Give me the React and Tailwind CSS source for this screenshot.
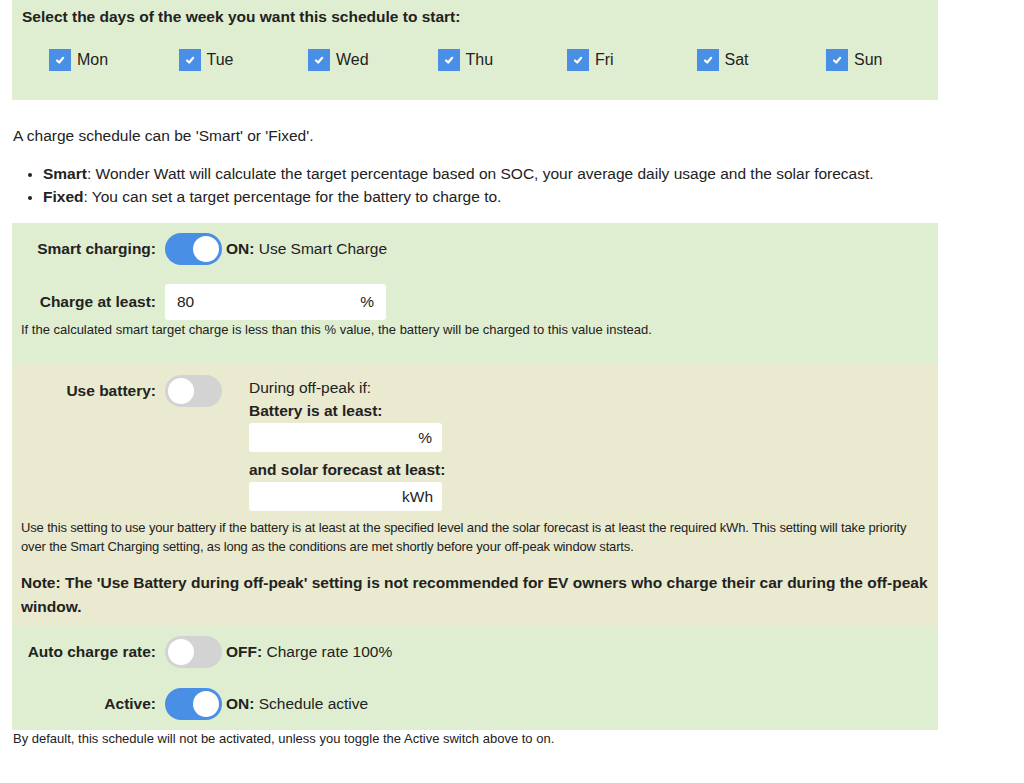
import React from "react";

const days = ["Mon", "Tue", "Wed", "Thu", "Fri", "Sat", "Sun"];

function Check() {
  return (
    <span className="flex h-[22px] w-[22px] items-center justify-center bg-[#4a8fe6]">
      <svg width="12" height="12" viewBox="0 0 12 12">
        <path d="M3 6.5 L5.2 8.5 L9.2 3.8" fill="none" stroke="white" strokeWidth="2.2" strokeLinecap="round" strokeLinejoin="round" />
      </svg>
    </span>
  );
}

function Toggle({ on }) {
  return (
    <span
      className={
        "flex h-[32px] w-[57px] shrink-0 items-center rounded-full p-[3px] " +
        (on ? "justify-end bg-[#4a8fe6]" : "justify-start bg-[#d3d3d3]")
      }
    >
      <span className="block h-[26px] w-[26px] rounded-full bg-white" />
    </span>
  );
}

function Row({ label, children, className = "" }) {
  return (
    <div className={"flex items-center " + className}>
      <div className="w-[144px] shrink-0 text-right text-[15.5px] font-bold text-[#222]">{label}</div>
      <div className="ml-[9px] flex items-center">{children}</div>
    </div>
  );
}

export default function App() {
  return (
    <div
      className="min-h-[783px] bg-white text-[#222]"
      style={{ fontFamily: '"Liberation Sans", Arial, sans-serif' }}
    >
      <div className="ml-[12px] w-[926px] bg-[#dfeed0] pb-[29px] pt-[7px]">
        <div className="pl-[10px] text-[15.5px] font-bold leading-[20px]">
          Select the days of the week you want this schedule to start:
        </div>
        <div className="mt-[22px] flex pl-[37px]">
          {days.map((d) => (
            <div key={d} className="flex w-[129.5px] shrink-0 items-center gap-[6px]">
              <Check />
              <span className="text-[16px] leading-[22px]">{d}</span>
            </div>
          ))}
        </div>
      </div>

      <p className="ml-[13px] mt-[26px] text-[15.5px] leading-[20px]">
        A charge schedule can be 'Smart' or 'Fixed'.
      </p>
      <ul className="ml-[43px] mt-[16px] list-disc text-[15.5px] leading-[23px] marker:text-[13px]">
        <li>
          <b>Smart</b>: Wonder Watt will calculate the target percentage based on SOC, your average daily usage and the solar forecast.
        </li>
        <li>
          <b>Fixed</b>: You can set a target percentage for the battery to charge to.
        </li>
      </ul>

      <div className="ml-[12px] mt-[15px] w-[926px] bg-[#dfeed0] pb-[24px] pt-[10px]">
        <Row label="Smart charging:">
          <Toggle on />
          <span className="ml-[4px] text-[15.5px]">
            <b>ON:</b> Use Smart Charge
          </span>
        </Row>
        <Row label="Charge at least:" className="mt-[19px]">
          <div className="flex h-[36px] w-[221px] items-center justify-between rounded-[3px] bg-white px-[12px] text-[15.5px]">
            <span>80</span>
            <span>%</span>
          </div>
        </Row>
        <p className="ml-[9px] mt-[1px] text-[13px] leading-[18px]">
          If the calculated smart target charge is less than this % value, the battery will be charged to this value instead.
        </p>
      </div>

      <div className="ml-[12px] w-[926px] bg-[#e9eacf] pb-[7px] pt-[12px]">
        <div className="flex items-start">
          <div className="flex h-[32px] w-[144px] shrink-0 items-center justify-end text-[15.5px] font-bold">
            Use battery:
          </div>
          <div className="ml-[9px]">
            <Toggle />
          </div>
          <div className="ml-[27px] mt-[1px] w-[193px]">
            <div className="text-[15.5px] leading-[23px]">During off-peak if:</div>
            <div className="text-[15.5px] font-bold leading-[23px]">Battery is at least:</div>
            <div className="mt-[1px] flex h-[29px] items-center justify-end rounded-[3px] bg-white px-[10px] text-[15.5px]">%</div>
            <div className="mt-[6px] whitespace-nowrap text-[15.5px] font-bold leading-[24px]">and solar forecast at least:</div>
            <div className="flex h-[29px] items-center justify-end rounded-[3px] bg-white px-[9px] text-[15.5px]">kWh</div>
          </div>
        </div>
        <p className="ml-[9px] mr-[4px] mt-[7px] text-[13px] leading-[19px] tracking-[-0.15px]">
          <span className="whitespace-nowrap">
            Use this setting to use your battery if the battery is at least at the specified level and the solar forecast is at least the required kWh. This setting will take priority
          </span>
          <br />
          over the Smart Charging setting, as long as the conditions are met shortly before your off-peak window starts.
        </p>
        <p className="ml-[9px] mr-[8px] mt-[15px] text-[15.5px] font-bold leading-[24px]">
          Note: The 'Use Battery during off-peak' setting is not recommended for EV owners who charge their car during the off-peak window.
        </p>
      </div>

      <div className="ml-[12px] w-[926px] bg-[#dfeed0] pb-[10px] pt-[10px]">
        <Row label="Auto charge rate:">
          <Toggle />
          <span className="ml-[4px] text-[15.5px]">
            <b>OFF:</b> Charge rate 100%
          </span>
        </Row>
        <Row label="Active:" className="mt-[20px]">
          <Toggle on />
          <span className="ml-[4px] text-[15.5px]">
            <b>ON:</b> Schedule active
          </span>
        </Row>
      </div>
      <p className="ml-[13px] text-[13px] leading-[18px]">
        By default, this schedule will not be activated, unless you toggle the Active switch above to on.
      </p>
    </div>
  );
}
